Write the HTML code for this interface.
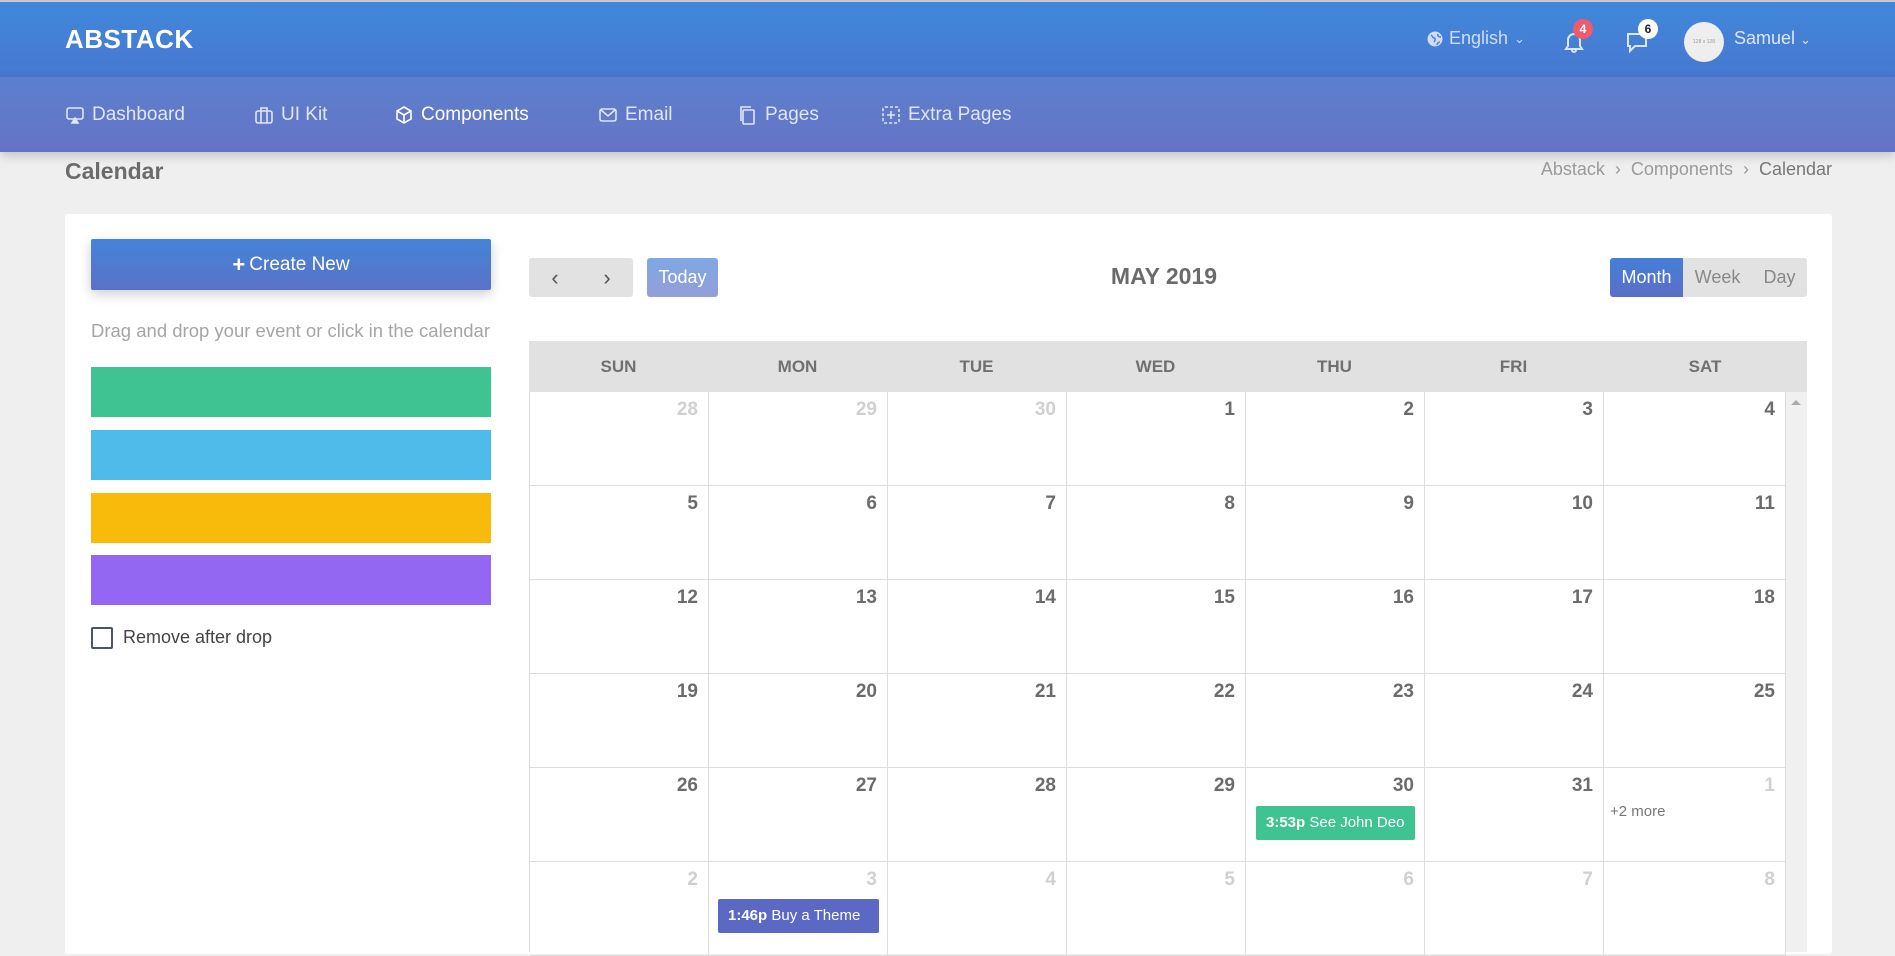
<!DOCTYPE html>
<html><head><meta charset="utf-8"><style>
*{margin:0;padding:0;box-sizing:border-box}
body{width:1895px;height:942px;overflow:hidden;background:#efefef;font-family:"Liberation Sans",sans-serif;position:relative}
.a{position:absolute}
.top{left:0;top:0;width:1895px;height:77px;background:linear-gradient(#4088da,#4878d0);border-top:2px solid #c8c8c8}
.nav{left:0;top:77px;width:1895px;height:75px;background:linear-gradient(#5b80cd,#6673c5);box-shadow:0 4px 10px rgba(0,0,0,.18)}
.logo{left:65px;top:24px;color:#fff;font-weight:bold;font-size:26px;letter-spacing:.5px}
.ni{top:104px;color:#dfe6f8;font-size:19px;display:flex;align-items:center;gap:7px}
.ni svg{width:20px;height:20px}
.card{left:65px;top:214px;width:1767px;height:740px;background:#fff;border-radius:3px}
.cn{left:91px;top:239px;width:400px;height:51px;background:linear-gradient(#4484d8,#5a72c8);color:#fff;font-size:19px;font-family:"Liberation Sans Narrow","Liberation Sans",sans-serif;display:flex;align-items:center;justify-content:center;box-shadow:0 4px 12px rgba(0,0,0,.2);border-radius:2px}
.bar{left:91px;width:400px;height:50px}
.num{position:absolute;right:10px;top:7px;font-family:"Liberation Sans Narrow","Liberation Sans",sans-serif;font-weight:bold;font-size:19px;color:#6b6b6b}
.o{color:#d0d0d0}
.hd{top:341px;height:51px;background:#e1e1e1;left:529px;width:1278px}
.hc{position:absolute;top:16px;font-family:"Liberation Sans Narrow","Liberation Sans",sans-serif;font-weight:bold;font-size:17px;color:#707070;text-align:center;width:179px}
.cell{position:absolute;width:179px;height:94px;border-right:1px solid #ddd;border-bottom:1px solid #ddd}
.ev{position:absolute;color:#fff;font-size:15px;border-radius:2px;height:34px;line-height:34px;padding-left:10px;font-family:"Liberation Sans Narrow","Liberation Sans",sans-serif}
</style></head><body>
<div class="a top"></div>
<div class="a nav"></div>
<div class="a logo">ABSTACK</div>
<div class="a ni" style="left:65px"><svg viewBox="0 0 20 20" fill="none" stroke="#dfe6f8" stroke-width="1.6"><rect x="2" y="3" width="16" height="11" rx="2"/><path d="M10 13l-3 5h6z" fill="#dfe6f8"/></svg>Dashboard</div>
<div class="a ni" style="left:254px"><svg viewBox="0 0 20 20" fill="none" stroke="#dfe6f8" stroke-width="1.6"><rect x="2" y="6" width="16" height="12" rx="2"/><path d="M7 6V3h6v3M7 6v12M13 6v12"/></svg>UI Kit</div>
<div class="a ni" style="left:394px;color:#fff"><svg viewBox="0 0 20 20" fill="none" stroke="#fff" stroke-width="1.6"><path d="M10 2l7 4v8l-7 4-7-4V6zM3 6l7 4 7-4M10 10v8"/></svg>Components</div>
<div class="a ni" style="left:598px"><svg viewBox="0 0 20 20" fill="none" stroke="#dfe6f8" stroke-width="1.6"><rect x="2" y="4" width="16" height="12" rx="2"/><path d="M3 5l7 6 7-6"/></svg>Email</div>
<div class="a ni" style="left:738px"><svg viewBox="0 0 20 20" fill="none" stroke="#dfe6f8" stroke-width="1.6"><rect x="5" y="5" width="11" height="14" rx="1"/><path d="M3 16V2h10"/></svg>Pages</div>
<div class="a ni" style="left:881px"><svg viewBox="0 0 20 20" fill="none" stroke="#dfe6f8" stroke-width="1.6"><rect x="2" y="2" width="16" height="16" rx="2" stroke-dasharray="3 2"/><path d="M10 6v8M6 10h8"/></svg>Extra Pages</div>
<div class="a" style="left:1427px;top:28px;color:#cfdcf5;font-size:18px;display:flex;align-items:center;gap:6px"><svg width="16" height="16" viewBox="0 0 16 16"><circle cx="8" cy="8" r="7.5" fill="#cfdcf5"/><path d="M4 4c2 1 1 3 3 3s1 3 0 4M11 3c-1 2 1 3 3 3M10 14c0-2 2-3 3-3" stroke="#4a80d4" stroke-width="1.5" fill="none"/></svg>English <span style="font-size:13px">&#8964;</span></div>
<svg class="a" style="left:1561px;top:29px" width="26" height="26" viewBox="0 0 26 26" fill="none" stroke="#dce6f8" stroke-width="2"><path d="M5 20h16l-2-3v-6a6 6 0 0 0-12 0v6zM11 21a2 2 0 0 0 4 0"/></svg>
<div class="a" style="left:1573px;top:19px;width:20px;height:20px;border-radius:50%;background:#ef5b6b;color:#fff;font-size:12px;font-weight:bold;text-align:center;line-height:20px">4</div>
<svg class="a" style="left:1625px;top:29px" width="26" height="26" viewBox="0 0 26 26" fill="none" stroke="#dce6f8" stroke-width="2"><path d="M3 5h18v12H10l-5 5v-5H3z"/></svg>
<div class="a" style="left:1638px;top:19px;width:20px;height:20px;border-radius:50%;background:#fff;color:#222;font-size:12px;font-weight:bold;text-align:center;line-height:20px">6</div>
<div class="a" style="left:1684px;top:22px;width:40px;height:40px;border-radius:50%;background:#eee;color:#999;font-size:5px;text-align:center;line-height:40px">128 x 128</div>
<div class="a" style="left:1734px;top:28px;color:#dfe6f8;font-size:18px">Samuel <span style="font-size:13px">&#8964;</span></div>

<div class="a" style="left:65px;top:158px;color:#6b6b6b;font-size:23px;font-weight:bold;font-family:'Liberation Sans Narrow','Liberation Sans',sans-serif">Calendar</div>
<div class="a" style="right:63px;top:159px;color:#9a9a9a;font-size:18px">Abstack &nbsp;›&nbsp; Components &nbsp;›&nbsp; <span style="color:#777">Calendar</span></div>

<div class="a card"></div>
<div class="a cn"><b style="font-size:22px;margin-right:4px">+</b>Create New</div>
<div class="a" style="left:91px;top:320px;color:#a5a5a5;font-size:18.5px">Drag and drop your event or click in the calendar</div>
<div class="a bar" style="top:367px;background:#3fc392"></div>
<div class="a bar" style="top:430px;background:#4fbbea"></div>
<div class="a bar" style="top:493px;background:#f8bb0b"></div>
<div class="a bar" style="top:555px;background:#9467f2"></div>
<div class="a" style="left:91px;top:627px;width:22px;height:22px;border:2.5px solid #4a5566;border-radius:2px"></div>
<div class="a" style="left:123px;top:627px;color:#444;font-size:18px;font-family:'Liberation Sans Narrow','Liberation Sans',sans-serif">Remove after drop</div>

<div class="a" style="left:529px;top:258px;width:104px;height:39px;background:#e2e2e2;border-radius:3px;color:#555;font-size:22px;display:flex;justify-content:space-around;align-items:center"><span>‹</span><span>›</span></div>
<div class="a" style="left:647px;top:258px;width:71px;height:39px;background:linear-gradient(#7ea8e4,#939ed8);border-radius:3px;color:#fff;font-size:18px;text-align:center;line-height:39px">Today</div>
<div class="a" style="left:1064px;top:263px;width:200px;text-align:center;color:#6b6b6b;font-size:23px;font-weight:bold">MAY 2019</div>
<div class="a" style="left:1610px;top:258px;width:197px;height:39px;background:#e2e2e2;border-radius:3px"></div>
<div class="a" style="left:1610px;top:258px;width:73px;height:39px;background:linear-gradient(#447fd9,#5b6ec6);border-radius:3px 0 0 3px;color:#fff;font-size:18px;text-align:center;line-height:39px">Month</div>
<div class="a" style="left:1683px;top:258px;width:69px;height:39px;color:#888;font-size:18px;text-align:center;line-height:39px">Week</div>
<div class="a" style="left:1752px;top:258px;width:55px;height:39px;color:#888;font-size:18px;text-align:center;line-height:39px">Day</div>

<div class="a hd">
<div class="hc" style="left:0">SUN</div><div class="hc" style="left:179px">MON</div><div class="hc" style="left:358px">TUE</div><div class="hc" style="left:537px">WED</div><div class="hc" style="left:716px">THU</div><div class="hc" style="left:895px">FRI</div><div class="hc" style="left:1074px;width:204px">SAT</div>
</div>
<div class="a" style="left:1785px;top:392px;width:22px;height:560px;background:#f0f0f0"></div>
<div class="a" style="left:1791px;top:400px;width:0;height:0;border-left:5px solid transparent;border-right:5px solid transparent;border-bottom:5px solid #aaa"></div>
<div class="a" style="left:529px;top:392px;width:1256px;height:560px;border-left:1px solid #ddd" id="g">
<div class="cell" style="left:0;top:0"><span class="num o">28</span></div><div class="cell" style="left:179px;top:0"><span class="num o">29</span></div><div class="cell" style="left:358px;top:0"><span class="num o">30</span></div><div class="cell" style="left:537px;top:0"><span class="num">1</span></div><div class="cell" style="left:716px;top:0"><span class="num">2</span></div><div class="cell" style="left:895px;top:0"><span class="num">3</span></div><div class="cell" style="left:1074px;top:0;width:182px"><span class="num">4</span></div>
<div class="cell" style="left:0;top:94px"><span class="num">5</span></div><div class="cell" style="left:179px;top:94px"><span class="num">6</span></div><div class="cell" style="left:358px;top:94px"><span class="num">7</span></div><div class="cell" style="left:537px;top:94px"><span class="num">8</span></div><div class="cell" style="left:716px;top:94px"><span class="num">9</span></div><div class="cell" style="left:895px;top:94px"><span class="num">10</span></div><div class="cell" style="left:1074px;top:94px;width:182px"><span class="num">11</span></div>
<div class="cell" style="left:0;top:188px"><span class="num">12</span></div><div class="cell" style="left:179px;top:188px"><span class="num">13</span></div><div class="cell" style="left:358px;top:188px"><span class="num">14</span></div><div class="cell" style="left:537px;top:188px"><span class="num">15</span></div><div class="cell" style="left:716px;top:188px"><span class="num">16</span></div><div class="cell" style="left:895px;top:188px"><span class="num">17</span></div><div class="cell" style="left:1074px;top:188px;width:182px"><span class="num">18</span></div>
<div class="cell" style="left:0;top:282px"><span class="num">19</span></div><div class="cell" style="left:179px;top:282px"><span class="num">20</span></div><div class="cell" style="left:358px;top:282px"><span class="num">21</span></div><div class="cell" style="left:537px;top:282px"><span class="num">22</span></div><div class="cell" style="left:716px;top:282px"><span class="num">23</span></div><div class="cell" style="left:895px;top:282px"><span class="num">24</span></div><div class="cell" style="left:1074px;top:282px;width:182px"><span class="num">25</span></div>
<div class="cell" style="left:0;top:376px"><span class="num">26</span></div><div class="cell" style="left:179px;top:376px"><span class="num">27</span></div><div class="cell" style="left:358px;top:376px"><span class="num">28</span></div><div class="cell" style="left:537px;top:376px"><span class="num">29</span></div><div class="cell" style="left:716px;top:376px"><span class="num">30</span></div><div class="cell" style="left:895px;top:376px"><span class="num">31</span></div><div class="cell" style="left:1074px;top:376px;width:182px"><span class="num o">1</span></div>
<div class="cell" style="left:0;top:470px"><span class="num o">2</span></div><div class="cell" style="left:179px;top:470px"><span class="num o">3</span></div><div class="cell" style="left:358px;top:470px"><span class="num o">4</span></div><div class="cell" style="left:537px;top:470px"><span class="num o">5</span></div><div class="cell" style="left:716px;top:470px"><span class="num o">6</span></div><div class="cell" style="left:895px;top:470px"><span class="num o">7</span></div><div class="cell" style="left:1074px;top:470px;width:182px"><span class="num o">8</span></div>
</div>
<div class="ev" style="left:1256px;top:806px;width:159px;background:#3fc392"><b>3:53p</b> See John Deo</div>
<div class="a" style="left:1610px;top:803px;color:#777;font-size:15px;font-family:'Liberation Sans Narrow','Liberation Sans',sans-serif">+2 more</div>
<div class="ev" style="left:718px;top:899px;width:161px;background:#5b69c4"><b>1:46p</b> Buy a Theme</div>
</body></html>
